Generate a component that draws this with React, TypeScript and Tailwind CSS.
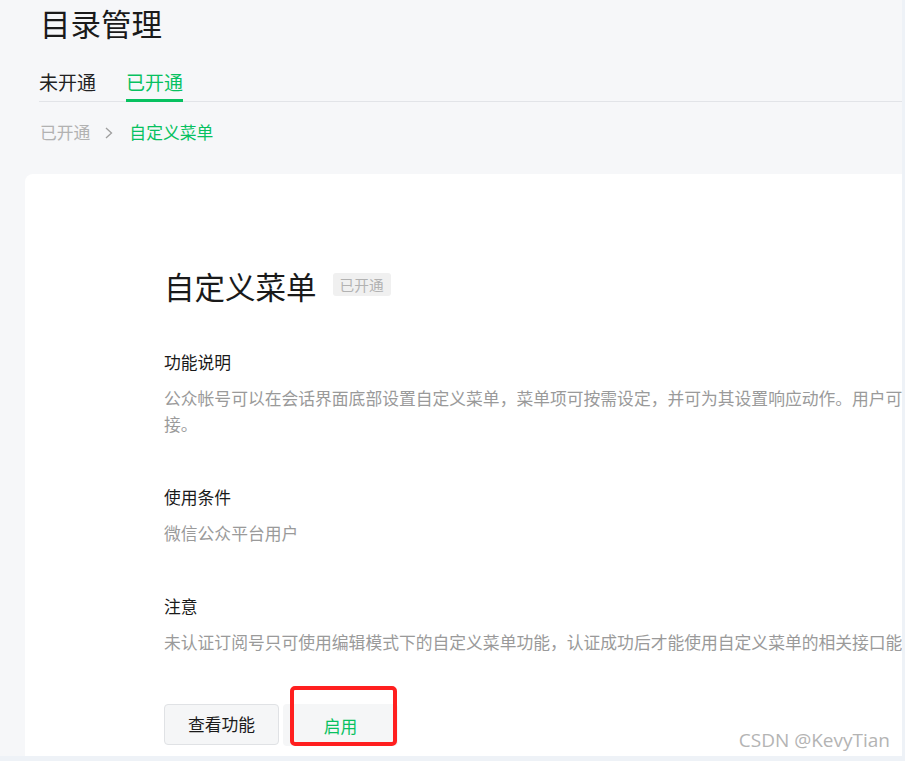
const FONT = 'font-["Noto_Sans_CJK_SC","Noto_Sans",sans-serif]'

function Section({ title, children }: { title: string; children: React.ReactNode }) {
  return (
    <div className="flex flex-col gap-[11px]">
      <p className="text-[16.8px] leading-[24px] text-[#1a1a1a]">{title}</p>
      <p className="text-[16.8px] leading-[26px] text-[#9a9a9a] whitespace-nowrap">{children}</p>
    </div>
  )
}

export default function App() {
  return (
    <div className={`${FONT} relative w-[905px] h-[761px] bg-[#eef2f7] overflow-hidden`}>
      <div className="w-[902px] h-[756px] bg-[#f6f7f9] overflow-hidden flex flex-col">

        {/* ── Header ─────────────────────────────────────────── */}
        <div className="pl-[39px]">
          <h1 className="pt-[3px] pl-px text-[30.5px] leading-[40px] text-[#1a1a1a]">目录管理</h1>
          <div className="mt-[26px] flex gap-[30px] border-b border-[#e2e4e8]">
            <div className="pb-[4px] -mb-px border-b-[3px] border-transparent text-[19px] leading-[26px] text-[#222]">未开通</div>
            <div className="pb-[4px] -mb-px border-b-[3px] border-[#07c160] text-[19px] leading-[26px] text-[#07c160]">已开通</div>
          </div>
          <div className="mt-[18px] flex items-center text-[16.8px] leading-[25px] pl-px">
            <span className="text-[#b2b2b2]">已开通</span>
            <svg className="ml-[15px] mr-[16px]" width="8" height="12" viewBox="0 0 8 12" fill="none">
              <path d="M1 1l5.5 5L1 11" stroke="#9e9e9e" strokeWidth="1.3" />
            </svg>
            <span className="text-[#07c160]">自定义菜单</span>
          </div>
        </div>

        {/* ── Card ───────────────────────────────────────────── */}
        <div className="mt-[29px] ml-[25px] flex-1 bg-white rounded-tl-[8px] pl-[139px] pt-[91px]">
          <div className="flex items-center">
            <h2 className="text-[30.5px] leading-[42px] text-[#1a1a1a]">自定义菜单</h2>
            <span className="ml-[16px] mb-[3px] h-[23px] px-[7px] rounded-[3px] bg-[#f0f0f0] text-[14.7px] leading-[23px] text-[#b2b2b2]">已开通</span>
          </div>

          <div className="mt-[43px] flex flex-col gap-[48px]">
            <Section title="功能说明">
              公众帐号可以在会话界面底部设置自定义菜单，菜单项可按需设定，并可为其设置响应动作。用户可以通过点击菜单项，收到你设定的响应，如收取消息、跳转链
              <br />
              接。
            </Section>
            <Section title="使用条件">微信公众平台用户</Section>
            <Section title="注意">未认证订阅号只可使用编辑模式下的自定义菜单功能，认证成功后才能使用自定义菜单的相关接口能力。</Section>
          </div>

          <div className="relative mt-[49px] flex gap-[4px]">
            <button className="w-[115px] h-[41px] rounded-[4px] border border-[#e0e2e5] bg-[#f5f6f7] text-[16.8px] text-[#1a1a1a]">查看功能</button>
            <button className="w-[115px] h-[42px] rounded-[4px] bg-[#f5f6f7] pt-[3px] text-[16.8px] text-[#07c160]">启用</button>
            <div className="absolute left-[126px] top-[-18px] w-[107px] h-[60px] border-[4px] border-[#ff1f1f] rounded-[5px]" />
          </div>
        </div>
      </div>

      <span className='absolute right-[15px] bottom-[9px] font-["Open_Sans",sans-serif] text-[19px] leading-[24px] text-[#b4b4b4]'>CSDN @KevyTian</span>
    </div>
  )
}
